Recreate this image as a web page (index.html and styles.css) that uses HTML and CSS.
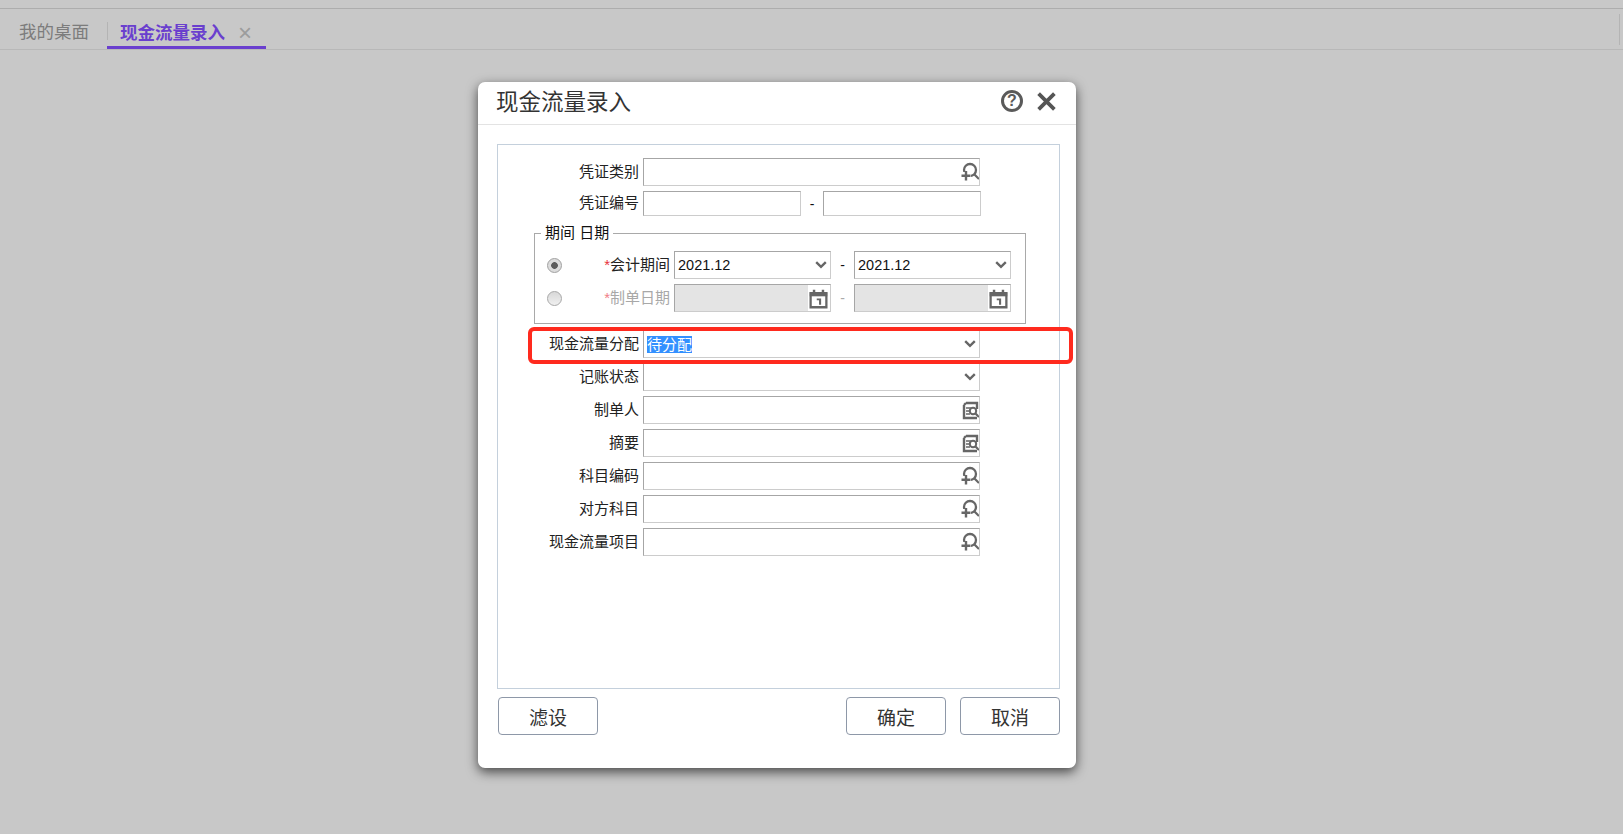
FILE: index.html
```html
<!DOCTYPE html>
<html lang="zh-CN">

<head>
    <meta charset="UTF-8">
    <title>现金流量录入</title>
    <link rel="stylesheet" href="styles.css">
</head>

<body>
    <svg class="icon-defs" width="0" height="0">
        <symbol id="i-ref" viewBox="0 0 24 24">
            <circle cx="15" cy="11" r="6" fill="none" stroke="#666" stroke-width="2.3"/>
            <path d="M19.5 15.5l4.5 4.5" stroke="#666" stroke-width="2.2" fill="none"/>
            <path d="M6 13h10v9H6z" fill="#fff"/>
            <path d="M11 12v9.5M6.5 16.8h9" stroke="#666" stroke-width="2.4" fill="none"/>
        </symbol>
        <symbol id="i-doc" viewBox="0 0 24 24">
            <path d="M11 6h11v6M9 8v13h13M9 8l2-2" stroke="#666" stroke-width="2.4" fill="none"/>
            <path d="M11 11h5M11 14h3M11 17h4" stroke="#666" stroke-width="1.4" fill="none"/>
            <circle cx="18" cy="14" r="3.2" fill="#fff" stroke="#666" stroke-width="2"/>
            <path d="M20.5 16.5l3.5 3.5" stroke="#666" stroke-width="2.2" fill="none"/>
        </symbol>
        <symbol id="i-cal" viewBox="0 0 24 24">
            <path d="M3 6h18v16H3z" fill="#fff" stroke="#666" stroke-width="2.6"/>
            <path d="M2 5h20v4.5H2z" fill="#666"/>
            <path d="M5.5 2h2.8v4H5.5zM15.7 2h2.8v4h-2.8z" fill="#666"/>
            <path d="M10 12h5v7h-2.4v-5H10z" fill="#666"/>
        </symbol>
        <symbol id="i-down" viewBox="0 0 12 8">
            <path d="M1.2 1.2l4.8 4.6 4.8-4.6" fill="none" stroke="#666" stroke-width="2.4"/>
        </symbol>
    </svg>

    <div class="topbar"></div>
    <div class="tabs">
        <div class="tab">我的桌面</div>
        <div class="tab tab-active">
            现金流量录入
            <span class="tab-close">×</span>
        </div>
        <div class="tabs-end"></div>
    </div>

    <div class="dialog">
        <div class="dialog-head">
            <h1>现金流量录入</h1>
            <span class="help">?</span>
            <svg class="close" width="21" height="21" viewBox="0 0 20 20">
                <path d="M2.5 2.5l15 15M17.5 2.5l-15 15" stroke="#555" stroke-width="3.6" fill="none"/>
            </svg>
        </div>

        <div class="filter-box">
            <div class="row first">
                <label>凭证类别</label>
                <div class="field wide"><svg class="ic"><use href="#i-ref"/></svg></div>
            </div>
            <div class="row short">
                <label>凭证编号</label>
                <div class="field half"></div>
                <span class="dash">-</span>
                <div class="field half"></div>
            </div>

            <fieldset class="period">
                <legend>期间 日期</legend>
                <div class="row">
                    <span class="radio checked"></span>
                    <label class="period-label"><em>*</em>会计期间</label>
                    <div class="field month">2021.12<svg class="down"><use href="#i-down"/></svg></div>
                    <span class="dash gap">-</span>
                    <div class="field month">2021.12<svg class="down"><use href="#i-down"/></svg></div>
                </div>
                <div class="row">
                    <span class="radio"></span>
                    <label class="period-label off"><em>*</em>制单日期</label>
                    <div class="field month disabled"><span class="fill"></span><svg class="ic cal"><use href="#i-cal"/></svg></div>
                    <span class="dash gap off">-</span>
                    <div class="field month disabled"><span class="fill"></span><svg class="ic cal"><use href="#i-cal"/></svg></div>
                </div>
            </fieldset>

            <div class="row after-period">
                <label>现金流量分配</label>
                <div class="field wide"><span class="selected">待分配</span><svg class="down"><use href="#i-down"/></svg></div>
            </div>
            <div class="row">
                <label>记账状态</label>
                <div class="field wide"><svg class="down"><use href="#i-down"/></svg></div>
            </div>
            <div class="row">
                <label>制单人</label>
                <div class="field wide"><svg class="ic"><use href="#i-doc"/></svg></div>
            </div>
            <div class="row">
                <label>摘要</label>
                <div class="field wide"><svg class="ic"><use href="#i-doc"/></svg></div>
            </div>
            <div class="row">
                <label>科目编码</label>
                <div class="field wide"><svg class="ic"><use href="#i-ref"/></svg></div>
            </div>
            <div class="row">
                <label>对方科目</label>
                <div class="field wide"><svg class="ic"><use href="#i-ref"/></svg></div>
            </div>
            <div class="row">
                <label>现金流量项目</label>
                <div class="field wide"><svg class="ic"><use href="#i-ref"/></svg></div>
            </div>
        </div>

        <div class="dialog-foot">
            <button class="btn">滤设</button>
            <span class="spacer"></span>
            <button class="btn">确定</button>
            <button class="btn">取消</button>
        </div>

        <!-- red mark drawn on top of the screenshot -->
        <div class="mark"></div>
    </div>
</body>

</html>
```

FILE: styles.css
```css
* {
    box-sizing: border-box;
}

body {
    margin: 0;
    height: 834px;
    overflow: hidden;
    background-color: #c8c8c8;
    font-family: "Liberation Sans", "Noto Sans CJK SC", sans-serif;
    color: #111;
}

.icon-defs {
    display: block;
    height: 0;
}

.topbar {
    height: 9px;
    border-bottom: 1px solid #adadad;
}

.tabs {
    height: 41px;
    display: flex;
    border-bottom: 1px solid #b8b8b8;
}

.tab {
    height: 40px;
    line-height: 47px;
    font-size: 17.5px;
    color: #7c7c7c;
    padding-left: 19px;
    width: 107px;
}

.tab-active {
    position: relative;
    width: 159px;
    padding-left: 13px;
    font-weight: bold;
    color: #6a3fce;
    border-bottom: 3px solid #6a3fce;
}

.tab-active::before {
    content: "";
    position: absolute;
    left: 0;
    top: 13px;
    height: 18px;
    border-left: 1px solid #b4b4b4;
}

.tab-close {
    font-weight: normal;
    font-size: 24px;
    color: #9c9c9c;
    margin-left: 8px;
    font-family: "Liberation Sans", sans-serif;
    vertical-align: -2px;
}

.tabs-end {
    margin-left: auto;
    margin-top: 5px;
    margin-right: 7px;
    height: 31px;
    border-left: 1px solid #b4b4b4;
    width: 1px;
    position: relative;
    left: 4px;
}

.dialog {
    position: absolute;
    left: 478px;
    top: 82px;
    width: 598px;
    height: 686px;
    background: #fff;
    border-radius: 7px;
    box-shadow: 0 4px 12px rgba(0, 0, 0, 0.65);
}

.dialog-head {
    height: 43px;
    display: flex;
    align-items: center;
    padding: 0 19px 6px 18px;
    border-bottom: 1px solid #e3e3e3;
}

.dialog-head h1 {
    margin: 0 auto 0 0;
    font-size: 22.5px;
    font-weight: normal;
    color: #333;
}

.help {
    width: 22px;
    height: 22px;
    border: 3px solid #5a5a5a;
    border-radius: 50%;
    font-size: 16px;
    line-height: 16px;
    font-weight: bold;
    text-align: center;
    color: #5a5a5a;
    margin: 2px 13px 0 0;
}

.close {
    display: block;
    margin-top: 2px;
}

.filter-box {
    margin: 19px 16px 0 19px;
    width: 563px;
    height: 545px;
    border: 1px solid #c4d0dc;
}

.row {
    display: flex;
    align-items: center;
    height: 28px;
    margin-top: 5px;
    font-size: 15px;
}

.row.first {
    margin-top: 13px;
}

.row.short {
    height: 25px;
}

.row.after-period {
    margin-top: 6px;
}

.row > label {
    width: 141px;
    margin-right: 4px;
    padding-bottom: 4px;
    text-align: right;
    white-space: nowrap;
    color: #222;
}

.field {
    position: relative;
    height: 100%;
    display: flex;
    align-items: center;
    padding-left: 3px;
    font-size: 14.5px;
    background: #fff;
    border: 1px solid #ccc;
    border-top: 1px solid #a6a6a6;
    border-left: 1px solid #a6a6a6;
}

.wide {
    width: 337px;
}

.half {
    width: 158px;
}

.month {
    width: 157px;
}

.selected {
    background-color: #3390ff;
    color: #fff;
    font-size: 15px;
    line-height: 17px;
}

.dash {
    width: 22px;
    text-align: center;
    font-size: 14px;
}

.dash.gap {
    width: 23px;
}

.dash.off {
    color: #aaa;
}

.ic {
    position: absolute;
    right: 0;
    top: 0;
    width: 24px;
    height: 24px;
}

.ic.cal {
    right: 1px;
    top: 3px;
    width: 21px;
    height: 21px;
}

.down {
    position: absolute;
    right: 3px;
    top: 9px;
    width: 12px;
    height: 8px;
}

.disabled {
    padding: 0;
}

.fill {
    display: block;
    width: 133px;
    height: 100%;
    background-color: #e4e4e4;
}

.period {
    width: 492px;
    height: 101px;
    margin: 7px 0 0 36px;
    padding: 0;
    border: 1px solid #a9a9a9;
}

.period legend {
    margin-left: 6px;
    padding: 0 4px;
    font-size: 15px;
    line-height: 20px;
}

.period .row {
    margin-top: 5px;
}

.period .row:first-of-type {
    margin-top: 8px;
}

.radio {
    flex: none;
    width: 15px;
    height: 15px;
    margin-left: 12px;
    border: 1px solid #a8a8a8;
    border-radius: 50%;
    background: linear-gradient(#d8d8d8, #f0f0f0);
}

.radio.checked {
    background: radial-gradient(circle, #5c5c5c 0 3px, #dcdcdc 3.7px);
    border-color: #a0a0a0;
}

.row > .period-label {
    width: 108px;
}

.period-label em {
    font-style: normal;
    color: #e8323c;
}

.period-label.off {
    color: #a8a8a8;
}

.period-label.off em {
    color: #f08088;
}

.dialog-foot {
    display: flex;
    gap: 14px;
    margin: 8px 16px 0 20px;
}

.spacer {
    flex: 1;
}

.btn {
    width: 100px;
    height: 38px;
    padding: 0;
    background: #fff;
    border: 1px solid #8e98a8;
    border-radius: 4px;
    font-family: inherit;
    font-size: 19px;
    color: #333;
}

.mark {
    position: absolute;
    left: 50px;
    top: 245px;
    width: 545px;
    height: 37px;
    border: 4px solid #ff2a1e;
    border-radius: 6px;
}
```
